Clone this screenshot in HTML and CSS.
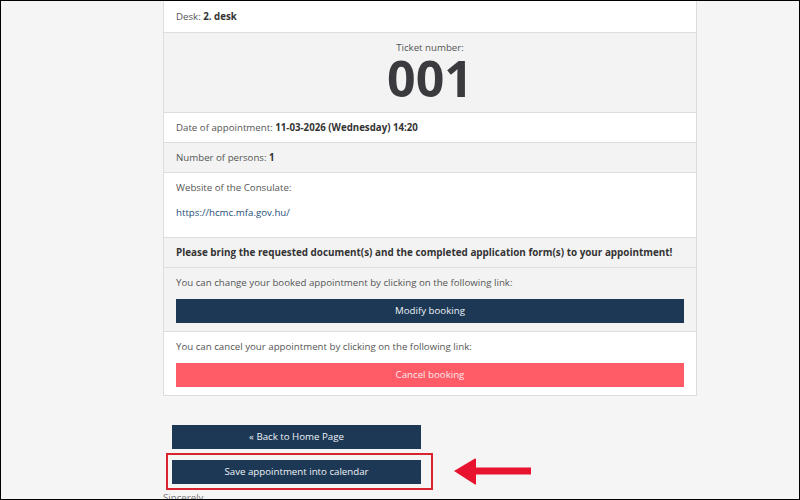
FILE: index.html
```html
<!DOCTYPE html>
<html>
<head>
<meta charset="utf-8">
<link rel="stylesheet" href="styles.css">
</head>
<body>
<div class="frame">
  <div class="content">
    <div class="card">
      <div class="row row-desk">Desk: <b>2. desk</b></div>
      <div class="row row-gray row-ticket">
        <div class="ticket-label">Ticket number:</div>
        <div class="ticket-num">001</div>
      </div>
      <div class="row">Date of appointment: <b>11-03-2026 (Wednesday) 14:20</b></div>
      <div class="row row-gray">Number of persons: <b>1</b></div>
      <div class="row row-site">
        <div>Website of the Consulate:</div>
        <a class="site-link" href="#">https://hcmc.mfa.gov.hu/</a>
      </div>
      <div class="row row-gray row-notice"><b>Please bring the requested document(s) and the completed application form(s) to your appointment!</b></div>
      <div class="row row-gray row-action">
        <div>You can change your booked appointment by clicking on the following link:</div>
        <div class="btn btn-navy">Modify booking</div>
      </div>
      <div class="row row-action">
        <div>You can cancel your appointment by clicking on the following link:</div>
        <div class="btn btn-red">Cancel booking</div>
      </div>
    </div>
    <div class="actions">
      <div class="btn btn-navy btn-small">« Back to Home Page</div>
      <div class="btn btn-navy btn-small">Save appointment into calendar</div>
      <div class="sincerely">Sincerely,</div>
      <div class="highlight"></div>
      <svg class="arrow" width="80" height="30" viewBox="0 0 80 30">
        <path d="M1 14 L22 1.5 Q23 1 23 2.5 L23 10.5 L78 10.5 L78 17.5 L23 17.5 L23 26.5 Q23 28 22 27.5 Z" fill="#e8132f"/>
      </svg>
    </div>
  </div>
</div>
</body>
</html>
```
FILE: styles.css
```css
* { box-sizing: border-box; }
html, body { margin: 0; padding: 0; }
body {
  font-family: "Open Sans", "Liberation Sans", sans-serif;
  font-size: 9.7px;
  color: #555;
}
.frame {
  width: 800px;
  height: 500px;
  border: 1px solid #000;
  background: #f5f5f5;
  overflow: hidden;
  padding-left: 162px;
}
.content {
  width: 534px;
  position: relative;
}
.card {
  background: #fff;
  border: 1px solid #ddd;
  border-top: none;
}
.row {
  padding: 7px 12px;
  line-height: 15px;
  border-top: 1px solid #ddd;
}
.row b { color: #333; font-weight: 700; }
.row-desk {
  border-top: none;
  padding: 8px 12px;
}
.row-gray { background: #f3f3f3; }
.row-ticket {
  text-align: center;
  padding: 8px 12px 10px;
}
.ticket-label { line-height: 13px; }
.ticket-num {
  font-size: 50px;
  line-height: 48px;
  height: 48px;
  font-weight: 700;
  color: #3a3a3f;
}
.row-site { padding-bottom: 17px; }
.site-link {
  display: block;
  margin-top: 10px;
  color: #1f4f7a;
  text-decoration: none;
}
.row-notice { font-size: 9.9px; }
.row-action { padding-bottom: 8px; }
.btn {
  height: 24px;
  line-height: 24px;
  text-align: center;
  color: #eef2f6;
  margin-top: 9px;
}
.btn-navy { background: #1c3855; }
.btn-red { background: #ff5c68; color: #fde9ea; }
.actions {
  position: relative;
  padding: 29px 0 0 9px;
}
.btn-small {
  width: 249px;
  margin-top: 0;
  margin-bottom: 11px;
}
.sincerely {
  margin-top: -4px;
  margin-left: -9px;
  color: #777;
  line-height: 14px;
}
.highlight {
  position: absolute;
  left: 3px;
  top: 57px;
  width: 267px;
  height: 37px;
  border: 2px solid #d9232d;
}
.arrow {
  position: absolute;
  left: 290px;
  top: 61px;
}
```
